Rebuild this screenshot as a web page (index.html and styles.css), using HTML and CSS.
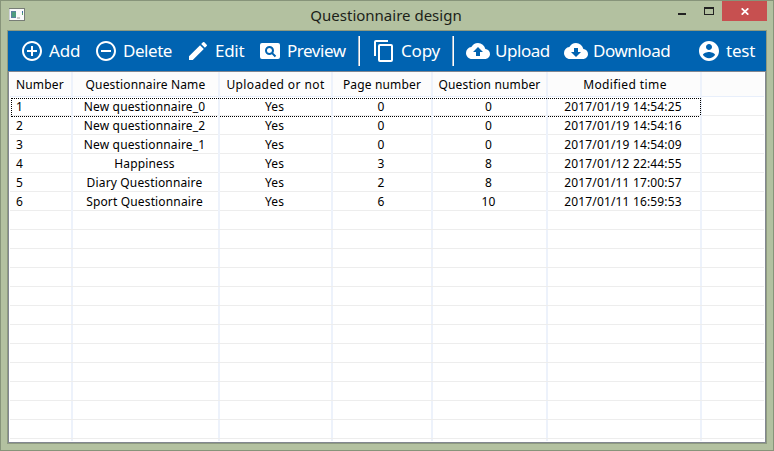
FILE: index.html
```html
<!DOCTYPE html>
<html lang="en">
<head>
<meta charset="utf-8">
<title>Questionnaire design</title>
<link rel="stylesheet" href="styles.css">
</head>
<body>
<div class="window">
  <header class="titlebar">
    <svg class="app-icon" width="16" height="13" viewBox="0 0 16 13" shape-rendering="crispEdges"><path fill="#777d76" d="M0 0h16v13H0z"/><path fill="#fafafa" d="M1 1h14v11H1z"/><path fill="#cfd3da" d="M0 1h1v11H0z"/><path fill="#5c7fa0" d="M2 3h5v7H2z"/><path fill="#4d9c7e" d="M3 4h4v5H3z"/><path fill="#c8c8c8" d="M8 9h3v2H8z"/><path fill="#3d6fa0" d="M13 3h1v2h-1z"/><path fill="#55a569" d="M13 5h1v2h-1z"/></svg>
    <h1 class="title">Questionnaire design</h1>
    <div class="controls">
      <svg width="8" height="2" class="minimize"><path fill="#222" d="M0 0h8v2H0z"/></svg>
      <svg width="10" height="8" class="maximize" shape-rendering="crispEdges"><path fill="#222" fill-rule="evenodd" d="M0 0h10v8H0zM1 2v5h8V2z"/></svg>
      <button class="close" aria-label="Close"><svg width="8" height="7" viewBox="0 0 8 7"><path d="M.7.3l6.6 6.4M7.3.3L.7 6.7" stroke="#fff" stroke-width="1.7"/></svg></button>
    </div>
  </header>
  <main class="client">
    <nav class="toolbar">
      <a class="tool add"><svg viewBox="0 0 24 24"><path d="M13 7h-2v4H7v2h4v4h2v-4h4v-2h-4V7zm-1-5C6.48 2 2 6.48 2 12s4.480 10 10 10 10-4.480 10-10S17.520 2 12 2zm0 18c-4.410 0-8-3.590-8-8s3.590-8 8-8 8 3.590 8 8-3.590 8-8 8z"/></svg><span>Add</span></a>
      <a class="tool delete"><svg viewBox="0 0 24 24"><path d="M7 11v2h10v-2H7zm5-9C6.480 2 2 6.480 2 12s4.480 10 10 10 10-4.480 10-10S17.520 2 12 2zm0 18c-4.410 0-8-3.590-8-8s3.590-8 8-8 8 3.590 8 8-3.590 8-8 8z"/></svg><span>Delete</span></a>
      <a class="tool edit"><svg viewBox="0 0 24 24"><path d="M3 17.250V21h3.750L17.810 9.940l-3.750-3.750L3 17.250zM20.710 7.040a1 1 0 0 0 0-1.410l-2.340-2.340a1 1 0 0 0-1.410 0l-1.830 1.830 3.750 3.750 1.830-1.830z"/></svg><span>Edit</span></a>
      <a class="tool preview"><svg viewBox="0 0 24 24"><path d="M11.500 9a2.500 2.500 0 1 0 0 5 2.500 2.500 0 0 0 0-5zM20 4H4a2 2 0 0 0-2 2v12a2 2 0 0 0 2 2h16a2 2 0 0 0 2-2V6a2 2 0 0 0-2-2zm-3.210 14.210l-2.910-2.910c-.69.440-1.510.7-2.390.7A4.500 4.500 0 1 1 16 11.500c0 .88-.26 1.690-.7 2.390l2.910 2.900-1.420 1.420z"/></svg><span>Preview</span></a>
      <i class="separator"></i>
      <a class="tool copy"><svg viewBox="0 0 24 24"><path d="M16 1H4a2 2 0 0 0-2 2v14h2V3h12V1zm3 4H8a2 2 0 0 0-2 2v14a2 2 0 0 0 2 2h11a2 2 0 0 0 2-2V7a2 2 0 0 0-2-2zm0 16H8V7h11v14z"/></svg><span>Copy</span></a>
      <i class="separator"></i>
      <a class="tool upload"><svg viewBox="0 0 24 24"><path d="M19.350 10.040A7.490 7.490 0 0 0 12 4C9.110 4 6.600 5.640 5.350 8.040A5.994 5.994 0 0 0 0 14c0 3.310 2.690 6 6 6h13c2.760 0 5-2.240 5-5 0-2.640-2.050-4.780-4.650-4.960zM14 13v4h-4v-4H7l5-5 5 5h-3z"/></svg><span>Upload</span></a>
      <a class="tool download"><svg viewBox="0 0 24 24"><path d="M19.350 10.040A7.490 7.490 0 0 0 12 4C9.110 4 6.600 5.640 5.350 8.040A5.994 5.994 0 0 0 0 14c0 3.310 2.690 6 6 6h13c2.760 0 5-2.240 5-5 0-2.640-2.050-4.780-4.650-4.960zM17 13l-5 5-5-5h3V9h4v4h3z"/></svg><span>Download</span></a>
      <a class="tool user"><svg viewBox="0 0 24 24"><path d="M12 2C6.480 2 2 6.480 2 12s4.480 10 10 10 10-4.480 10-10S17.520 2 12 2zm0 3c1.660 0 3 1.340 3 3s-1.340 3-3 3-3-1.340-3-3 1.340-3 3-3zm0 14.200c-2.500 0-4.710-1.280-6-3.220.03-1.990 4-3.080 6-3.080 1.990 0 5.970 1.090 6 3.080-1.290 1.940-3.500 3.220-6 3.220z"/></svg><span>test</span></a>
    </nav>
    <section class="list">
      <div class="row head"><b>Number</b><b>Questionnaire Name</b><b class="wide">Uploaded or not</b><b>Page number</b><b>Question number</b><b class="time">Modified time</b><b></b></div>
      <div class="row focused"><span>1</span><span>New questionnaire_0</span><span>Yes</span><span>0</span><span>0</span><span>2017/01/19 14:54:25</span><span></span></div>
      <div class="row"><span>2</span><span>New questionnaire_2</span><span>Yes</span><span>0</span><span>0</span><span>2017/01/19 14:54:16</span><span></span></div>
      <div class="row"><span>3</span><span>New questionnaire_1</span><span>Yes</span><span>0</span><span>0</span><span>2017/01/19 14:54:09</span><span></span></div>
      <div class="row"><span>4</span><span>Happiness</span><span>Yes</span><span>3</span><span>8</span><span>2017/01/12 22:44:55</span><span></span></div>
      <div class="row"><span>5</span><span>Diary Questionnaire</span><span>Yes</span><span>2</span><span>8</span><span>2017/01/11 17:00:57</span><span></span></div>
      <div class="row"><span>6</span><span>Sport Questionnaire</span><span>Yes</span><span>6</span><span>10</span><span>2017/01/11 16:59:53</span><span></span></div>
      <div class="row"><span></span><span></span><span></span><span></span><span></span><span></span><span></span></div>
      <div class="row"><span></span><span></span><span></span><span></span><span></span><span></span><span></span></div>
      <div class="row"><span></span><span></span><span></span><span></span><span></span><span></span><span></span></div>
      <div class="row"><span></span><span></span><span></span><span></span><span></span><span></span><span></span></div>
      <div class="row"><span></span><span></span><span></span><span></span><span></span><span></span><span></span></div>
      <div class="row"><span></span><span></span><span></span><span></span><span></span><span></span><span></span></div>
      <div class="row"><span></span><span></span><span></span><span></span><span></span><span></span><span></span></div>
      <div class="row"><span></span><span></span><span></span><span></span><span></span><span></span><span></span></div>
      <div class="row"><span></span><span></span><span></span><span></span><span></span><span></span><span></span></div>
      <div class="row"><span></span><span></span><span></span><span></span><span></span><span></span><span></span></div>
      <div class="row"><span></span><span></span><span></span><span></span><span></span><span></span><span></span></div>
      <div class="row"><span></span><span></span><span></span><span></span><span></span><span></span><span></span></div>
      <div class="row tail"><span></span><span></span><span></span><span></span><span></span><span></span><span></span></div>
    </section>
  </main>
</div>
</body>
</html>
```
FILE: styles.css
```css
* { box-sizing: border-box; }
body {
  margin: 0;
  font-family: "Noto Sans", "Open Sans", sans-serif;
}
.window {
  width: 774px;
  height: 451px;
  border: 1px solid #87947a;
  background: #b3c1a0;
  padding: 0 6px 7px;
}
.titlebar {
  height: 29px;
  display: grid;
  grid-template-columns: 120px 1fr 120px;
}
.app-icon { margin: 7px 0 0 2px; }
.title {
  margin: 0;
  padding-right: 2px;
  font-size: 15px;
  font-weight: 400;
  line-height: 29px;
  text-align: center;
  color: #1c1f19;
}
.controls {
  display: flex;
  justify-content: flex-end;
  align-items: flex-start;
}
.minimize { margin: 12px 18px 0 0; }
.maximize { margin: 6px 8px 0 0; }
.close {
  width: 45px;
  height: 20px;
  padding: 0;
  border: 0;
  background: #c75050;
  display: flex;
  align-items: center;
  justify-content: center;
}
.client {
  border: 1px solid #8e9a80;
  height: 414px;
}
.toolbar {
  height: 40px;
  display: flex;
  align-items: center;
  background: #0063b1;
  color: #fff;
  padding-left: 12px;
}
.tool {
  display: flex;
  align-items: center;
  gap: 5px;
  font-size: 17px;
  letter-spacing: -0.45px;
  line-height: 40px;
  white-space: nowrap;
}
.tool svg {
  flex: none;
  width: 24px;
  height: 24px;
  fill: #fff;
}
.add { width: 74px; }
.delete { width: 92px; }
.edit { width: 72px; }
.preview { width: 100px; }
.separator {
  width: 2px;
  height: 30px;
  background: linear-gradient(90deg, #a3b7cb 50%, #fff 50%);
}
.copy { width: 80px; margin-left: 12px; }
.upload { width: 98px; margin-left: 12px; }
.download { width: 133px; }
.list {
  height: 372px;
  border: 1px solid #828790;
  background: #fff;
  padding: 0 1px 2px;
  overflow: hidden;
}
.edit { letter-spacing: -0.3px; }
.copy, .user, .add { letter-spacing: -0.2px; }
.row {
  position: relative;
  height: 19px;
  display: grid;
  grid-template-columns: 63px 147px 113px 100px 115px 154px 1fr;
  border-bottom: 1px solid #ededed;
  font-size: 12px;
  letter-spacing: 0.15px;
  line-height: 19px;
  color: #000;
}
.row > * {
  border-right: 2px solid #edf2fb;
  padding-right: 2px;
  text-align: center;
  font-weight: 400;
  white-space: nowrap;
}
.row > :last-child { border-right: 0; }
.row > :first-child { text-align: left; padding-left: 6px; }
.head {
  height: 25px;
  background: #fcfcfc;
  line-height: 25px;
  border-bottom-color: #e8effb;
}
.head > * { padding-right: 0; }
.head .wide { letter-spacing: 0.4px; }
.head .time { letter-spacing: 0.4px; padding-left: 2px; }
.focused::after {
  content: "";
  position: absolute;
  left: 1px;
  top: 1px;
  width: 688px;
  height: 17px;
  border: 1px dotted #000;
}
.tail { height: 2px; border-bottom: 0; }
```
